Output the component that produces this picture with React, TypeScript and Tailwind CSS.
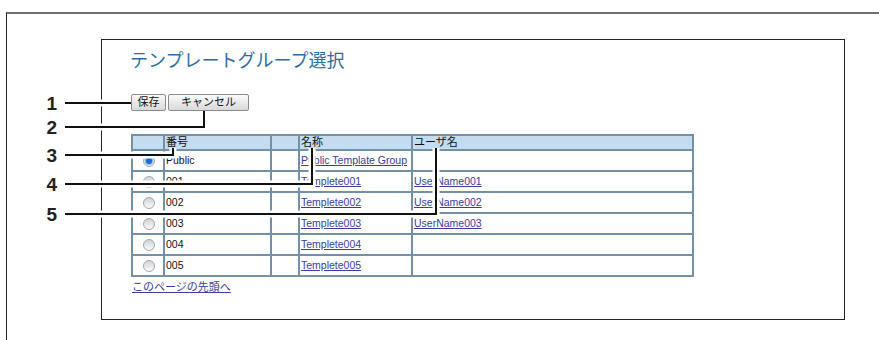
import React from "react";

type Row = { no: string; name: string; user?: string; selected?: boolean };

const rows: Row[] = [
  { no: "Public", name: "Public Template Group", selected: true },
  { no: "001", name: "Templete001", user: "UserName001" },
  { no: "002", name: "Templete002", user: "UserName002" },
  { no: "003", name: "Templete003", user: "UserName003" },
  { no: "004", name: "Templete004" },
  { no: "005", name: "Templete005" },
];

// callout lines: label y, end x, end y
const callouts = [
  { n: "1", y: 103, x: 131, top: 103 },
  { n: "2", y: 127, x: 204, top: 111 },
  { n: "3", y: 155, x: 173, top: 148 },
  { n: "4", y: 184, x: 312, top: 148 },
  { n: "5", y: 214, x: 436, top: 148 },
];

const font = { fontFamily: '"Liberation Sans", "Noto Sans CJK JP", sans-serif' };

function Radio({ on }: { on?: boolean }) {
  return (
    <span className="flex size-[12px] items-center justify-center rounded-full border border-[#a2a8ae] bg-gradient-to-b from-[#cfd3d6] to-[#fbfbfb]">
      {on && <span className="size-[6px] rounded-full bg-[#1b6fd8] shadow-[0_0_1px_1px_#7fb0ea]" />}
    </span>
  );
}

const cell = "flex items-center border-r-2 border-b-2 border-[#7290a7] pl-[1px]";

export default function App() {
  return (
    <div className="relative h-[340px] w-[879px] overflow-hidden bg-white text-[#111]" style={font}>
      <div className="ml-[6px] mt-[12px] h-[328px] border-l border-t-2 border-l-[#222] border-t-[#6e6e6e]">
        <div className="ml-[94px] mt-[25px] h-[281px] w-[744px] border border-[#222]">
          <h1 className="ml-[28px] mt-[9px] text-[18px] leading-[24px] text-[#2c6da5]">テンプレートグループ選択</h1>

          <div className="ml-[29px] mt-[21px] flex h-[17px] gap-[2px] text-[11px]">
            <button className="flex w-[35px] items-center justify-center rounded-[2px] border border-[#8c8c8c] bg-gradient-to-b from-[#fbfbfb] to-[#d9d9d9]">
              保存
            </button>
            <button className="flex w-[81px] items-center justify-center rounded-[2px] border border-[#8c8c8c] bg-gradient-to-b from-[#fbfbfb] to-[#d9d9d9]">
              キャンセル
            </button>
          </div>

          <div className="ml-[29px] mt-[23px] grid w-[563px] grid-cols-[32px_107px_28px_113px_281px] border-l-2 border-t-2 border-[#7290a7] text-[10.5px]">
            <div className={`${cell} h-[15px] bg-[#c3dcef]`} />
            <div className={`${cell} h-[15px] bg-[#c3dcef] text-[11px]`}>番号</div>
            <div className={`${cell} h-[15px] bg-[#c3dcef]`} />
            <div className={`${cell} h-[15px] bg-[#c3dcef] text-[11px]`}>名称</div>
            <div className={`${cell} h-[15px] bg-[#c3dcef] text-[11px]`}>ユーザ名</div>
            {rows.map((r) => (
              <React.Fragment key={r.no}>
                <div className={`${cell} h-[21px] justify-center`}>
                  <Radio on={r.selected} />
                </div>
                <div className={`${cell} h-[21px]`}>{r.no}</div>
                <div className={`${cell} h-[21px]`} />
                <div className={`${cell} h-[21px]`}>
                  <a className="text-[#3b3ba3] underline">{r.name}</a>
                </div>
                <div className={`${cell} h-[21px]`}>
                  {r.user && <a className="text-[#3b3ba3] underline">{r.user}</a>}
                </div>
              </React.Fragment>
            ))}
          </div>

          <a className="ml-[30px] mt-[3px] block text-[11px] leading-[14px] text-[#3b3ba3] underline">このページの先頭へ</a>
        </div>
      </div>

      <svg className="pointer-events-none absolute inset-0" width="879" height="340">
        {callouts.map((c) => (
          <polyline
            key={"h" + c.n}
            points={`65,${c.y} ${c.x},${c.y} ${c.x},${c.top}`}
            fill="none"
            stroke="#fff"
            strokeWidth="7"
          />
        ))}
        {callouts.map((c) => (
          <polyline
            key={"l" + c.n}
            points={`65,${c.y} ${c.x},${c.y} ${c.x},${c.top}`}
            fill="none"
            stroke="#111"
            strokeWidth="2"
          />
        ))}
      </svg>

      {callouts.map((c) => (
        <span
          key={c.n}
          className="absolute left-[38px] w-[19px] text-right text-[19px] font-bold leading-[20px] text-[#222]"
          style={{ top: c.y - 9 }}
        >
          {c.n}
        </span>
      ))}
    </div>
  );
}
